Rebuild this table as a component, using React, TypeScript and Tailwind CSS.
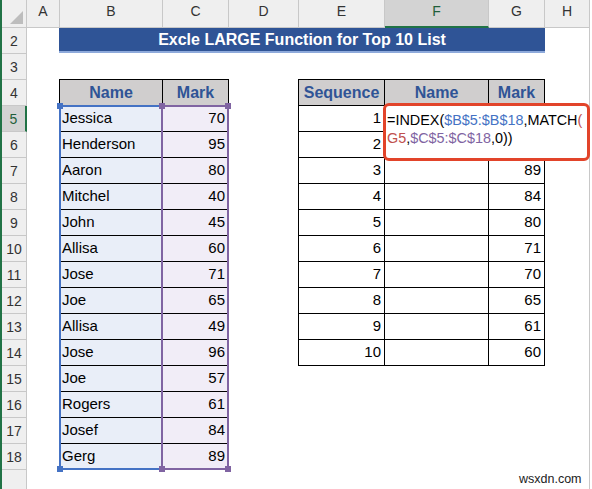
import React from "react";

const font = "font-['Liberation_Sans',Arial,sans-serif]";

const cols = [
  { label: "A", w: "w-[33px]" },
  { label: "B", w: "w-[103px]" },
  { label: "C", w: "w-[66px]" },
  { label: "D", w: "w-[70px]" },
  { label: "E", w: "w-[86px]" },
  { label: "F", w: "w-[104px]", active: true },
  { label: "G", w: "w-[56px]" },
];

const marks: [string, number][] = [
  ["Jessica", 70],
  ["Henderson", 95],
  ["Aaron", 80],
  ["Mitchel", 40],
  ["John", 45],
  ["Allisa", 60],
  ["Jose", 71],
  ["Joe", 65],
  ["Allisa", 49],
  ["Jose", 96],
  ["Joe", 57],
  ["Rogers", 61],
  ["Josef", 84],
  ["Gerg", 89],
];

// first two results sit under the editing cell, so they're not drawn
const top10: (number | null)[] = [null, null, 89, 84, 80, 71, 70, 65, 61, 60];

const rowNums = Array.from({ length: 17 }, (_, i) => i + 2);

function Handle({ x, y, color }: { x: number; y: number; color: string }) {
  return (
    <div
      className="absolute h-[6px] w-[6px]"
      style={{ left: x - 3, top: y - 3, background: color }}
    />
  );
}

function ColumnHeader() {
  return (
    <div className="flex h-[28px] text-[14px] text-[#333]">
      <div className="relative w-[25px] border-r border-b border-[#c8c8c8] bg-[#efefef]">
        <svg className="absolute right-[3px] bottom-[3px]" width="13" height="13">
          <polygon points="13,0 13,13 0,13" fill="#bdbdbd" />
        </svg>
      </div>
      {cols.map((c) => (
        <div
          key={c.label}
          className={
            c.active
              ? `${c.w} flex items-end justify-center border-r border-b-2 border-r-[#c8c8c8] border-b-[#217346] bg-[#d3d3d3] pb-[4px] text-[#1f5f3a]`
              : `${c.w} flex items-end justify-center border-r border-b border-[#c8c8c8] bg-[#efefef] pb-[5px]`
          }
        >
          {c.label}
        </div>
      ))}
      <div className="flex flex-1 items-end justify-center border-b border-[#c8c8c8] bg-[#efefef] pb-[5px]">
        H
      </div>
    </div>
  );
}

function RowHeaders() {
  return (
    <div className="flex w-[25px] flex-col text-[14px] text-[#333]">
      {rowNums.map((n) =>
        n === 5 ? (
          <div
            key={n}
            className="flex h-[26px] items-end justify-center border-r-2 border-b border-r-[#217346] border-b-[#c8c8c8] bg-[#d3d3d3] pb-[1px] text-[#1f5f3a]"
          >
            {n}
          </div>
        ) : (
          <div
            key={n}
            className="flex h-[26px] items-end justify-center border-r border-b border-[#c8c8c8] bg-[#efefef] pb-[1px]"
          >
            {n}
          </div>
        )
      )}
      <div className="flex-1 border-r border-[#c8c8c8] bg-[#efefef]" />
    </div>
  );
}

function MarksTable() {
  return (
    <div className="grid w-[170px] grid-cols-[102px_65px] gap-px bg-black p-px text-[15px]">
      <div className="flex h-[25px] items-center justify-center bg-[#d0cece] text-[16px] font-bold text-[#2f5496]">
        Name
      </div>
      <div className="flex h-[25px] items-center justify-center bg-[#d0cece] text-[16px] font-bold text-[#2f5496]">
        Mark
      </div>
      {marks.map(([name, mark], i) => (
        <React.Fragment key={i}>
          <div className="flex h-[25px] items-center bg-[#e9eef8] pl-[2px]">{name}</div>
          <div className="flex h-[25px] items-center justify-end bg-[#f1edf7] pr-[3px]">{mark}</div>
        </React.Fragment>
      ))}
    </div>
  );
}

function TopTable() {
  return (
    <div className="grid w-[247px] grid-cols-[85px_103px_55px] gap-px bg-black p-px text-[15px]">
      {["Sequence", "Name", "Mark"].map((h) => (
        <div
          key={h}
          className="flex h-[25px] items-center justify-center bg-[#d0cece] text-[16px] font-bold text-[#2f5496]"
        >
          {h}
        </div>
      ))}
      {top10.map((v, i) => (
        <React.Fragment key={i}>
          <div className="flex h-[25px] items-center justify-end bg-white pr-[3px]">{i + 1}</div>
          <div className="h-[25px] bg-white" />
          <div className="flex h-[25px] items-center justify-end bg-white pr-[3px]">{v}</div>
        </React.Fragment>
      ))}
    </div>
  );
}

export default function App() {
  return (
    <div className={`relative flex h-[489px] w-[592px] overflow-hidden bg-white ${font}`}>
      <div className="w-[2px] bg-[#217346]" />
      <div className="flex w-[587px] flex-col">
        <ColumnHeader />
        <div className="flex flex-1">
          <RowHeaders />
          <div className="flex flex-1 flex-col">
            <div className="h-[25px] pl-[32px]">
              <div className="flex h-[23px] w-[486px] items-center justify-center bg-[#2f5496] text-[16px] font-bold text-white">
                Excle LARGE Function for Top 10 List
              </div>
              <div className="h-[2px] w-[486px] bg-[#8eaadb]" />
            </div>
            <div className="h-[26px]" />
            <div className="flex items-start pl-[32px]">
              <MarksTable />
              <div className="ml-[69px]">
                <TopTable />
              </div>
            </div>
          </div>
        </div>
      </div>
      <div className="flex-1 border-l border-[#c8c8c8] bg-white" />

      {/* reference range outlines while editing */}
      <div className="absolute top-[105px] left-[59px] h-[365px] w-[104px] border-2 border-[#4472c4]" />
      <div className="absolute top-[105px] left-[161px] h-[365px] w-[68px] border-2 border-[#8064a2]" />
      <Handle x={60} y={106} color="#4472c4" />
      <Handle x={60} y={469} color="#4472c4" />
      <Handle x={162} y={106} color="#8064a2" />
      <Handle x={228} y={106} color="#8064a2" />
      <Handle x={162} y={469} color="#8064a2" />
      <Handle x={228} y={469} color="#8064a2" />

      {/* cell in edit mode, circled */}
      <div className="absolute top-[103px] left-[383px] h-[58px] w-[207px] rounded-[6px] border-[3px] border-[#e2442a] bg-white pt-[5px] pl-[1px] text-[14.4px] leading-[18px] text-black">
        <div>
          =INDEX(<span className="text-[#4472c4]">$B$5:$B$18</span>,MATCH
          <span className="text-[#c0504d]">(</span>
        </div>
        <div>
          <span className="text-[#c0504d]">G5</span>,<span className="text-[#8064a2]">$C$5:$C$18</span>,0))
        </div>
      </div>

      <div className="absolute top-[470px] left-[519px] text-[12.5px] text-[#222]">wsxdn.com</div>
    </div>
  );
}
